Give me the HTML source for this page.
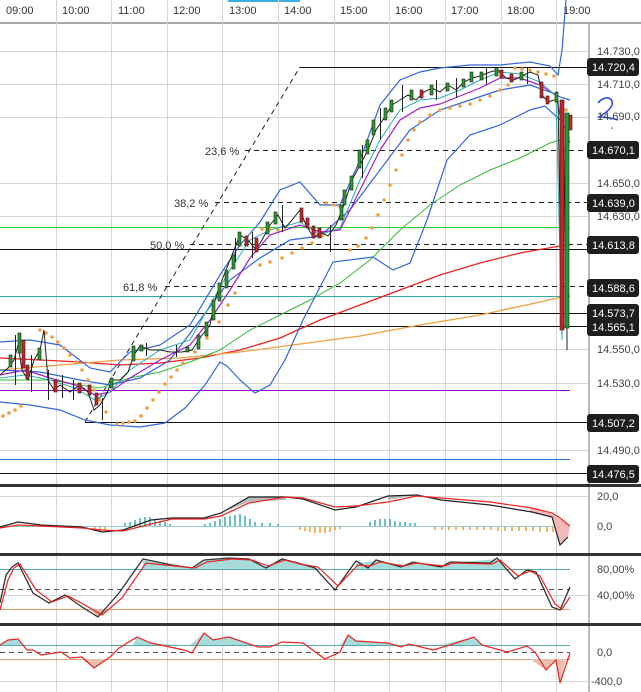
<!DOCTYPE html>
<html><head><meta charset="utf-8"><style>
html,body{margin:0;padding:0;background:#fff;}
svg{display:block;font-family:"Liberation Sans",sans-serif;}
.t{font-size:11px;fill:#333;}
.ax{font-size:11px;fill:#444;}
.lb{font-size:11px;fill:#fff;}
</style></head><body>
<svg width="641" height="692" viewBox="0 0 641 692" xmlns="http://www.w3.org/2000/svg">
<rect width="641" height="692" fill="#fff"/>
<rect x="228" y="0" width="72" height="2" fill="#3ab0e0"/>
<line x1="0" y1="23" x2="641" y2="23" stroke="#aaa" stroke-width="2"/>
<g class="t">
<text x="6" y="14">09:00</text><text x="62" y="14">10:00</text><text x="118" y="14">11:00</text><text x="173" y="14">12:00</text><text x="229" y="14">13:00</text><text x="284" y="14">14:00</text><text x="340" y="14">15:00</text><text x="395" y="14">16:00</text><text x="451" y="14">17:00</text><text x="507" y="14">18:00</text><text x="563" y="14">19:00</text>
</g>
<g stroke="#d6d6d6" stroke-width="1">
<line x1="56.5" y1="0" x2="56.5" y2="692"/><line x1="111.5" y1="0" x2="111.5" y2="692"/><line x1="167.5" y1="0" x2="167.5" y2="692"/><line x1="222.5" y1="0" x2="222.5" y2="692"/><line x1="278.5" y1="0" x2="278.5" y2="692"/><line x1="334.5" y1="0" x2="334.5" y2="692"/><line x1="389.5" y1="0" x2="389.5" y2="692"/><line x1="445.5" y1="0" x2="445.5" y2="692"/><line x1="501.5" y1="0" x2="501.5" y2="692"/><line x1="556.5" y1="0" x2="556.5" y2="692"/>
<line x1="0" y1="51.5" x2="589" y2="51.5"/><line x1="0" y1="84.5" x2="589" y2="84.5"/><line x1="0" y1="117.5" x2="589" y2="117.5"/><line x1="0" y1="183.5" x2="589" y2="183.5"/><line x1="0" y1="216.5" x2="589" y2="216.5"/><line x1="0" y1="349.5" x2="589" y2="349.5"/><line x1="0" y1="383.5" x2="589" y2="383.5"/><line x1="0" y1="450.5" x2="589" y2="450.5"/>
<line x1="0" y1="496.5" x2="589" y2="496.5"/><line x1="0" y1="595.5" x2="589" y2="595.5"/><line x1="0" y1="681.5" x2="589" y2="681.5"/>
</g>
<line x1="589" y1="24" x2="589" y2="692" stroke="#bbb" stroke-width="2"/>
<g stroke-width="1">
<line x1="300" y1="67.5" x2="589" y2="67.5" stroke="#111"/>
<line x1="0" y1="249.5" x2="589" y2="249.5" stroke="#111"/>
<line x1="0" y1="313.5" x2="589" y2="313.5" stroke="#111"/>
<line x1="0" y1="326.5" x2="589" y2="326.5" stroke="#111"/>
<line x1="85" y1="422.5" x2="589" y2="422.5" stroke="#111"/>
<line x1="0" y1="473.5" x2="589" y2="473.5" stroke="#111"/>
<line x1="0" y1="227.5" x2="570" y2="227.5" stroke="#3c3"/>
<line x1="0" y1="296.5" x2="570" y2="296.5" stroke="#3aa"/>
<line x1="0" y1="390.5" x2="570" y2="390.5" stroke="#90c"/>
<line x1="0" y1="459.5" x2="570" y2="459.5" stroke="#27c"/>
<g stroke="#222" stroke-dasharray="5,4">
<line x1="245" y1="150.5" x2="589" y2="150.5"/>
<line x1="215" y1="202.5" x2="589" y2="202.5"/>
<line x1="190" y1="244.5" x2="589" y2="244.5"/>
<line x1="165" y1="286.5" x2="589" y2="286.5"/>
<line x1="85" y1="422" x2="300" y2="67"/>
</g>
</g>
<g class="t" fill="#333"><text x="205" y="155">23,6 %</text><text x="174" y="207">38,2 %</text><text x="150" y="249">50,0 %</text><text x="123" y="291">61,8 %</text></g>
<polyline fill="none" stroke="#e22" stroke-width="1.3" points="0,358 40,360 80,362 120,365 160,363 200,358 240,350 280,338 320,320 360,305 400,290 440,275 480,263 520,253 560,246 570,245"/>
<polyline fill="none" stroke="#f0a040" stroke-width="1.3" points="0,370 60,365 120,360 180,358 240,352 300,344 360,336 420,325 480,315 540,302 570,295"/>
<polyline fill="none" stroke="#3b3" stroke-width="1" points="0,380 50,380 100,388 130,378 160,372 190,362 220,350 250,330 280,315 310,300 340,283 370,260 400,230 430,205 460,185 490,170 520,158 550,143 560,140 570,138"/>
<polyline fill="none" stroke="#3366dd" stroke-width="1.2" points="0,342 30,340 60,345 90,368 110,372 130,352 160,345 190,325 220,275 240,245 260,222 280,190 300,182 320,205 340,205 360,160 380,105 400,80 420,72 440,68 470,65 500,65 530,62 550,66 558,75 562,50 566,0"/>
<polyline fill="none" stroke="#3366dd" stroke-width="1.2" points="0,402 30,405 60,410 85,420 110,425 140,427 165,423 185,408 205,385 220,362 227,366 240,380 255,393 270,385 285,360 303,320 333,262 373,257 393,270 410,263 427,220 447,160 470,135 500,125 530,110 545,106 560,120"/>
<polyline fill="none" stroke="#3366dd" stroke-width="1.2" points="0,370 40,372 80,380 110,385 140,378 170,360 200,320 230,280 260,258 290,240 320,236 350,210 380,170 410,130 440,110 470,100 500,90 530,85 550,92 560,97 570,100"/>
<polyline fill="none" stroke="#a020d0" stroke-width="1.2" points="0,375 25,370 50,378 75,385 95,395 110,392 130,378 160,360 190,345 210,320 230,290 250,258 270,235 300,225 320,232 340,230 360,190 380,150 400,120 420,108 440,104 460,96 480,88 500,78 520,78 540,85 556,95 562,125 568,130"/>
<polyline fill="none" stroke="#30b0b0" stroke-width="1" points="0,378 25,375 50,380 75,388 95,400 110,392 130,370 160,350 190,340 210,305 230,270 250,240 270,230 300,222 320,235 340,228 360,180 380,140 400,110 420,100 440,98 460,90 480,80 500,72 520,74 540,82 556,96 562,340 565,160 570,140"/>
<g fill="#f0a040">
<circle cx="40" cy="330" r="1.8"/><circle cx="46" cy="333" r="1.8"/><circle cx="52" cy="337" r="1.8"/><circle cx="58" cy="342" r="1.8"/><circle cx="64" cy="348" r="1.8"/><circle cx="70" cy="355" r="1.8"/><circle cx="76" cy="362" r="1.8"/><circle cx="82" cy="370" r="1.8"/><circle cx="88" cy="380" r="1.8"/><circle cx="94" cy="390" r="1.8"/><circle cx="100" cy="400" r="1.8"/><circle cx="106" cy="412" r="1.8"/>
<circle cx="3" cy="416" r="1.8"/><circle cx="9" cy="413" r="1.8"/><circle cx="15" cy="410" r="1.8"/><circle cx="21" cy="406" r="1.8"/>
<circle cx="117" cy="424" r="1.8"/><circle cx="123" cy="423" r="1.8"/><circle cx="129" cy="422" r="1.8"/><circle cx="135" cy="421" r="1.8"/><circle cx="141" cy="416" r="1.8"/><circle cx="147" cy="408" r="1.8"/><circle cx="153" cy="400" r="1.8"/><circle cx="159" cy="392" r="1.8"/><circle cx="165" cy="384" r="1.8"/><circle cx="171" cy="377" r="1.8"/><circle cx="177" cy="370" r="1.8"/><circle cx="183" cy="363" r="1.8"/><circle cx="195" cy="352" r="1.8"/><circle cx="207" cy="338" r="1.8"/><circle cx="219" cy="322" r="1.8"/><circle cx="228" cy="305" r="1.8"/><circle cx="235" cy="293" r="1.8"/>
<circle cx="262" cy="229" r="1.8"/><circle cx="270" cy="229" r="1.8"/><circle cx="278" cy="230" r="1.8"/>
<circle cx="260" cy="265" r="1.8"/><circle cx="270" cy="262" r="1.8"/><circle cx="282" cy="258" r="1.8"/><circle cx="292" cy="253" r="1.8"/><circle cx="302" cy="248" r="1.8"/><circle cx="312" cy="243" r="1.8"/><circle cx="322" cy="236" r="1.8"/>
<circle cx="326" cy="203" r="1.8"/><circle cx="334" cy="205" r="1.8"/><circle cx="340" cy="207" r="1.8"/>
<circle cx="350" cy="250" r="1.8"/><circle cx="358" cy="246" r="1.8"/><circle cx="366" cy="238" r="1.8"/><circle cx="372" cy="228" r="1.8"/><circle cx="378" cy="215" r="1.8"/><circle cx="384" cy="200" r="1.8"/><circle cx="390" cy="185" r="1.8"/><circle cx="396" cy="170" r="1.8"/><circle cx="402" cy="155" r="1.8"/><circle cx="408" cy="140" r="1.8"/><circle cx="414" cy="130" r="1.8"/><circle cx="420" cy="122" r="1.8"/><circle cx="430" cy="115" r="1.8"/><circle cx="440" cy="110" r="1.8"/><circle cx="450" cy="108" r="1.8"/><circle cx="460" cy="106" r="1.8"/><circle cx="470" cy="104" r="1.8"/><circle cx="480" cy="100" r="1.8"/><circle cx="490" cy="96" r="1.8"/><circle cx="500" cy="90" r="1.8"/><circle cx="508" cy="85" r="1.8"/>
<circle cx="515" cy="68" r="1.8"/><circle cx="522" cy="69" r="1.8"/><circle cx="530" cy="70" r="1.8"/><circle cx="538" cy="72" r="1.8"/><circle cx="546" cy="74" r="1.8"/><circle cx="554" cy="76" r="1.8"/><circle cx="566" cy="110" r="1.8"/>
</g>
<polyline fill="none" stroke="#222" stroke-width="1" points="0,375 8,368 14,360 18,345 22,370 28,380 34,360 40,350 44,330 48,380 54,390 60,385 70,392 80,385 88,392 94,410 100,405 106,395 112,380 120,380 128,372 134,355 140,346 150,350 160,350 170,352 182,352 192,350 200,338 210,325 215,300 222,280 230,260 240,235 248,240 256,250 262,240 270,225 278,215 285,228 292,220 300,210 306,225 314,238 320,232 328,236 336,225 344,205 352,180 360,165 368,150 376,130 384,118 392,105 400,100 408,95 416,100 424,92 432,88 440,92 448,85 456,90 464,82 472,78 480,76 490,72 498,70 506,78 514,80 522,76 530,72 538,75 542,95 548,102 554,100 558,100 562,330 566,115 570,125"/>
<!-- wicks -->
<g stroke="#222" stroke-width="1">
<line x1="15.5" y1="335" x2="15.5" y2="385"/><line x1="31.5" y1="355" x2="31.5" y2="392"/><line x1="48.5" y1="370" x2="48.5" y2="400"/><line x1="62.5" y1="375" x2="62.5" y2="398"/><line x1="73.5" y1="380" x2="73.5" y2="400"/><line x1="102.5" y1="398" x2="102.5" y2="420"/><line x1="146.5" y1="343" x2="146.5" y2="356"/><line x1="176.5" y1="345" x2="176.5" y2="357"/><line x1="235.5" y1="238" x2="235.5" y2="262"/><line x1="252.5" y1="232" x2="252.5" y2="258"/><line x1="282.5" y1="205" x2="282.5" y2="232"/><line x1="330.5" y1="225" x2="330.5" y2="252"/><line x1="362.5" y1="145" x2="362.5" y2="178"/><line x1="380.5" y1="108" x2="380.5" y2="140"/><line x1="402.5" y1="85" x2="402.5" y2="112"/><line x1="436.5" y1="80" x2="436.5" y2="100"/><line x1="456.5" y1="78" x2="456.5" y2="98"/><line x1="486.5" y1="68" x2="486.5" y2="84"/><line x1="527.5" y1="68" x2="527.5" y2="84"/>
</g>
<g fill="#2a9a2a" stroke="#222" stroke-width="0.6">
<rect x="18" y="333" width="3" height="20"/><rect x="9" y="355" width="3" height="12"/><rect x="38" y="348" width="3" height="12"/><rect x="110" y="378" width="3" height="10"/><rect x="132" y="346" width="3" height="15"/><rect x="140" y="345" width="3" height="6"/><rect x="186" y="347" width="3" height="5"/><rect x="197" y="335" width="3" height="14"/><rect x="205" y="322" width="3" height="14"/><rect x="212" y="300" width="3" height="20"/><rect x="218" y="283" width="3" height="18"/><rect x="225" y="270" width="3" height="18"/><rect x="232" y="255" width="3" height="14"/><rect x="238" y="232" width="3" height="14"/><rect x="266" y="222" width="3" height="12"/><rect x="274" y="212" width="3" height="12"/><rect x="340" y="205" width="3" height="15"/><rect x="343" y="190" width="3" height="15"/><rect x="350" y="176" width="3" height="14"/><rect x="358" y="150" width="3" height="18"/><rect x="366" y="140" width="3" height="14"/><rect x="372" y="120" width="3" height="15"/><rect x="384" y="108" width="3" height="12"/><rect x="390" y="100" width="3" height="12"/><rect x="410" y="90" width="3" height="10"/><rect x="430" y="85" width="3" height="10"/><rect x="446" y="83" width="3" height="8"/><rect x="462" y="79" width="3" height="8"/><rect x="470" y="72" width="3" height="10"/><rect x="480" y="72" width="3" height="8"/><rect x="495" y="68" width="3" height="8"/><rect x="520" y="72" width="3" height="8"/><rect x="555" y="92" width="3" height="10"/>
<rect x="565" y="113" width="4" height="215"/>
</g>
<g fill="#c22" stroke="#222" stroke-width="0.6">
<rect x="22" y="340" width="3" height="28"/><rect x="26" y="365" width="3" height="14"/><rect x="54" y="380" width="3" height="12"/><rect x="78" y="383" width="3" height="10"/><rect x="88" y="385" width="3" height="10"/><rect x="95" y="393" width="3" height="12"/><rect x="245" y="236" width="3" height="10"/><rect x="255" y="238" width="3" height="14"/><rect x="300" y="208" width="3" height="14"/><rect x="306" y="218" width="3" height="10"/><rect x="312" y="226" width="3" height="12"/><rect x="318" y="228" width="3" height="10"/><rect x="420" y="90" width="3" height="8"/><rect x="500" y="70" width="3" height="8"/><rect x="510" y="74" width="3" height="8"/><rect x="540" y="82" width="3" height="16"/><rect x="546" y="96" width="3" height="8"/>
<rect x="560" y="100" width="4" height="230"/><rect x="569" y="115" width="3" height="15"/>
</g>
<line x1="567" y1="328" x2="567" y2="350" stroke="#222"/>
<path d="M598,103 C604,95 614,97 612,105 C610,110 604,114 599,117 C606,117 612,118 618,120" fill="none" stroke="#2244ee" stroke-width="1.5"/>
<circle cx="612" cy="128" r="0.8" fill="#2244ee"/>
<g class="ax">
<text x="597" y="55">14.730,0</text><text x="597" y="88">14.710,0</text><text x="597" y="120">14.690,0</text><text x="597" y="187">14.650,0</text><text x="597" y="220">14.630,0</text><text x="597" y="353">14.550,0</text><text x="597" y="387">14.530,0</text><text x="597" y="454">14.490,0</text>
</g>
<g fill="#1e1e1e">
<rect x="587" y="58" width="52" height="18" rx="3"/><rect x="587" y="141" width="52" height="18" rx="3"/><rect x="587" y="194" width="52" height="18" rx="3"/><rect x="587" y="236" width="52" height="18" rx="3"/><rect x="587" y="279" width="52" height="18" rx="3"/><rect x="587" y="304" width="52" height="32" rx="3"/><rect x="587" y="414" width="52" height="18" rx="3"/><rect x="587" y="465" width="52" height="18" rx="3"/>
</g>
<g class="lb">
<text x="592" y="71">14.720,4</text><text x="592" y="154">14.670,1</text><text x="592" y="207">14.639,0</text><text x="592" y="249">14.613,8</text><text x="592" y="292">14.588,6</text><text x="592" y="317">14.573,7</text><text x="592" y="331">14.565,1</text><text x="592" y="427">14.507,2</text><text x="592" y="478">14.476,5</text>
</g>
<rect x="0" y="484" width="641" height="3" fill="#333"/>
<rect x="0" y="553" width="641" height="3" fill="#333"/>
<rect x="0" y="623" width="641" height="3" fill="#333"/>
<!-- MACD -->
<line x1="0" y1="526.5" x2="570" y2="526.5" stroke="#9cc"/>
<g transform="translate(0,-10)">
<g stroke="#3aabb0" stroke-width="1.5">
<line x1="125" y1="536" x2="125" y2="533"/><line x1="130" y1="536" x2="130" y2="532"/><line x1="135" y1="536" x2="135" y2="530"/><line x1="140" y1="536" x2="140" y2="528"/><line x1="145" y1="536" x2="145" y2="527"/><line x1="150" y1="536" x2="150" y2="527"/><line x1="155" y1="536" x2="155" y2="529"/><line x1="160" y1="536" x2="160" y2="531"/><line x1="165" y1="536" x2="165" y2="532"/><line x1="170" y1="536" x2="170" y2="534"/>
<line x1="205" y1="536" x2="205" y2="534"/><line x1="210" y1="536" x2="210" y2="533"/><line x1="215" y1="536" x2="215" y2="531"/><line x1="220" y1="536" x2="220" y2="529"/><line x1="225" y1="536" x2="225" y2="527"/><line x1="230" y1="536" x2="230" y2="526"/><line x1="235" y1="536" x2="235" y2="525"/><line x1="240" y1="536" x2="240" y2="524"/><line x1="245" y1="536" x2="245" y2="526"/><line x1="250" y1="536" x2="250" y2="529"/><line x1="255" y1="536" x2="255" y2="532"/><line x1="262" y1="536" x2="262" y2="533"/><line x1="270" y1="536" x2="270" y2="533"/><line x1="278" y1="536" x2="278" y2="534"/>
<line x1="370" y1="536" x2="370" y2="532"/><line x1="375" y1="536" x2="375" y2="530"/><line x1="380" y1="536" x2="380" y2="529"/><line x1="385" y1="536" x2="385" y2="529"/><line x1="390" y1="536" x2="390" y2="529"/><line x1="395" y1="536" x2="395" y2="531"/><line x1="400" y1="536" x2="400" y2="532"/><line x1="405" y1="536" x2="405" y2="532"/><line x1="410" y1="536" x2="410" y2="533"/><line x1="415" y1="536" x2="415" y2="533"/>
</g>
<g stroke="#f0a030" stroke-width="1.5">
<line x1="300" y1="537" x2="300" y2="540"/><line x1="305" y1="537" x2="305" y2="541"/><line x1="310" y1="537" x2="310" y2="542"/><line x1="315" y1="537" x2="315" y2="543"/><line x1="320" y1="537" x2="320" y2="543"/><line x1="325" y1="537" x2="325" y2="543"/><line x1="330" y1="537" x2="330" y2="542"/><line x1="335" y1="537" x2="335" y2="540"/><line x1="340" y1="537" x2="340" y2="539"/>
<line x1="95" y1="537" x2="95" y2="540"/><line x1="100" y1="537" x2="100" y2="541"/><line x1="105" y1="537" x2="105" y2="540"/>
<line x1="435" y1="537" x2="435" y2="540"/><line x1="442" y1="537" x2="442" y2="540"/><line x1="449" y1="537" x2="449" y2="540"/><line x1="456" y1="537" x2="456" y2="540"/><line x1="463" y1="537" x2="463" y2="540"/><line x1="470" y1="537" x2="470" y2="540"/><line x1="477" y1="537" x2="477" y2="540"/><line x1="484" y1="537" x2="484" y2="540"/><line x1="491" y1="537" x2="491" y2="540"/><line x1="498" y1="537" x2="498" y2="541"/><line x1="505" y1="537" x2="505" y2="541"/><line x1="512" y1="537" x2="512" y2="541"/><line x1="519" y1="537" x2="519" y2="541"/><line x1="526" y1="537" x2="526" y2="541"/><line x1="533" y1="537" x2="533" y2="541"/><line x1="540" y1="537" x2="540" y2="542"/><line x1="547" y1="537" x2="547" y2="542"/><line x1="553" y1="537" x2="553" y2="542"/><line x1="560" y1="537" x2="560" y2="552"/>
</g>
</g>
<polygon fill="#f4b8b8" points="530,512 552,517 560,544 568,537 570,526 552,514 530,508"/>
<polygon fill="#bbb" points="221,513 249,497 286,497 286,500 249,502"/>
<polygon fill="#bbb" points="388,496 417,495 388,500"/>
<polyline fill="none" stroke="#222" stroke-width="1.2" points="0,527 18,522 41,525 82,527 102,532 123,530 151,520 172,518 204,518 221,513 249,497 286,497 303,499 335,510 356,507 388,496 417,495 441,500 490,505 532,512 552,517 560,545 568,537"/>
<polyline fill="none" stroke="#e22" stroke-width="1.2" points="0,528 18,525 41,526 82,528 102,530 123,531 151,524 172,519 204,519 221,516 249,503 286,497 303,498 335,507 356,506 388,502 417,496 441,498 490,502 532,508 552,513 560,518 570,526"/>
<g class="ax"><text x="597" y="500">20,0</text><text x="597" y="530">0,0</text></g>
<!-- Stoch -->
<line x1="0" y1="569.5" x2="570" y2="569.5" stroke="#5aa"/>
<line x1="0" y1="589.5" x2="570" y2="589.5" stroke="#555" stroke-dasharray="5,4"/>
<line x1="0" y1="609.5" x2="570" y2="609.5" stroke="#d9a070"/>
<polygon fill="#a8dcdc" points="143,569 143,560 172,565 192,568 204,560 229,558 249,559 266,568 282,559 298,563 315,568 325,569 356,569 356,563 376,561 401,567 413,562 441,567 450,563 497,559 506,569"/>
<polygon fill="#e0b8a0" points="90,609 98,617 109,609"/>
<polyline fill="none" stroke="#333" stroke-width="1.3" points="0,603 6,575 12,567 18,563 33,593 49,603 65,595 82,607 98,617 119,593 143,559 172,565 192,568 204,560 229,558 249,559 266,568 282,559 298,563 315,568 335,590 356,561 368,568 376,560 401,567 413,562 441,567 450,562 490,563 497,558 515,579 527,570 536,572 552,607 560,610 570,587"/>
<polyline fill="none" stroke="#e22" stroke-width="1.2" points="0,610 8,580 14,568 20,564 36,590 52,602 68,596 85,605 102,615 122,598 146,563 175,566 195,568 207,562 232,559 252,560 268,566 285,560 300,564 318,567 338,586 358,565 370,566 380,562 404,566 416,563 444,566 453,563 492,564 500,560 518,576 530,571 540,576 555,604 562,609 570,597"/>
<g class="ax"><text x="597" y="573">80,00%</text><text x="597" y="599">40,00%</text></g>
<!-- CCI -->
<line x1="0" y1="645.5" x2="570" y2="645.5" stroke="#5aa"/>
<line x1="0" y1="652.5" x2="570" y2="652.5" stroke="#555" stroke-dasharray="5,4"/>
<line x1="0" y1="659.5" x2="570" y2="659.5" stroke="#d9a070"/>
<polygon fill="#a8dcdc" points="0,645 8,640 18,639 24,645 133,645 137,637 151,643 180,645 190,645 204,633 213,640 229,637 255,645 340,645 348,635 356,641 388,643 400,645 440,645 474,637 482,645 495,645"/>
<polygon fill="#e8c0b0" points="82,659 94,668 106,659"/>
<polygon fill="#e8c0b0" points="530,659 546,670 556,660 560,683 566,659"/>
<polyline fill="none" stroke="#e22" stroke-width="1.2" points="0,645 8,640 18,639 27,650 33,650 41,655 61,652 70,658 82,657 94,668 110,657 119,648 137,637 151,643 184,650 192,653 204,633 213,640 229,637 258,647 270,647 282,642 303,643 325,659 340,652 348,635 356,641 388,643 401,647 409,644 433,650 450,645 474,637 482,645 507,652 527,646 535,652 546,670 556,660 560,683 570,653"/>
<g class="ax"><text x="597" y="656">0,0</text><text x="591" y="685">-400,0</text></g>
</svg>
</body></html>
